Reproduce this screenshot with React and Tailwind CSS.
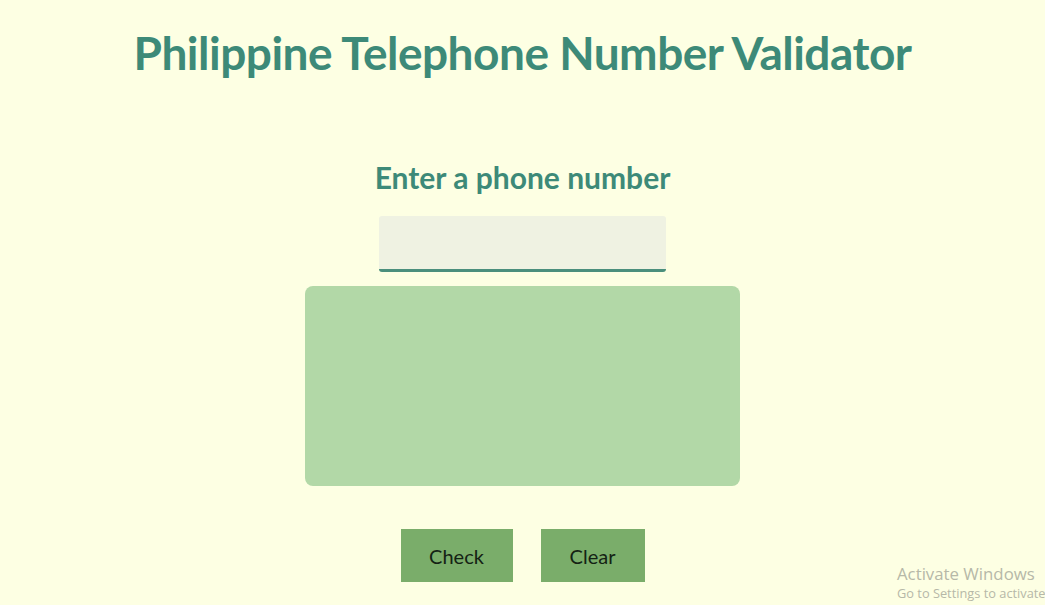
export default function App() {
  return (
    <div className="relative min-h-[605px] w-full overflow-hidden bg-[#fdffe3] font-['Lato','Open_Sans',sans-serif]">
      <h1 className="pt-[25px] text-center text-[46px] font-bold leading-[56px] tracking-[-0.5px] text-[#3d8a78]">
        Philippine Telephone Number Validator
      </h1>

      <div className="mt-[78px] flex flex-col items-center">
        <h2 className="text-[30px] font-bold leading-[36px] text-[#3d8a78]">Enter a phone number</h2>
        <input
          type="text"
          className="mt-[21px] h-[56px] w-[287px] rounded-[3px] border-b-[3px] border-[#4a8f7c] bg-[#eff2e2] px-3 text-lg outline-none"
        />
        <div className="mt-[14px] h-[200px] w-[435px] rounded-[8px] bg-[#b2d8a7]" />

        <div className="mt-[43px] flex gap-[28px]">
          <button className="h-[53px] w-[112px] bg-[#7aad6a] text-[20px] text-[#142214]">Check</button>
          <button className="h-[53px] w-[104px] bg-[#7aad6a] text-[20px] text-[#142214]">Clear</button>
        </div>
      </div>

      <div className="absolute left-[897px] top-[564px] font-['Open_Sans',sans-serif] text-[#b6b8a8]">
        <div className="text-[16.8px] leading-[20px]">Activate Windows</div>
        <div className="text-[12.8px] leading-[19px] whitespace-nowrap">Go to Settings to activate</div>
      </div>
    </div>
  );
}
